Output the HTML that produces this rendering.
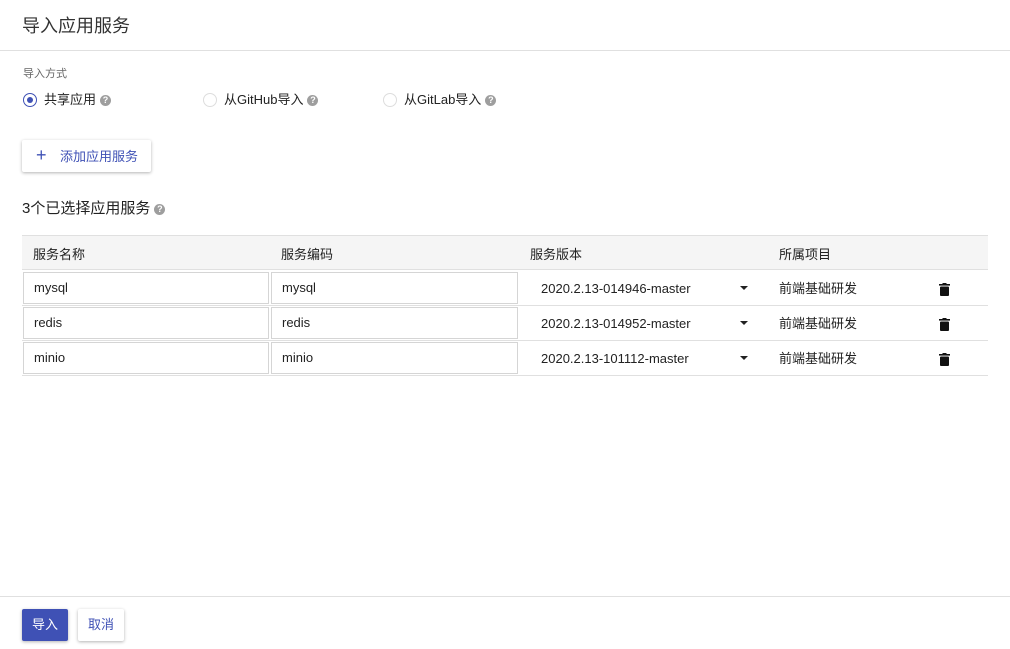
<!DOCTYPE html>
<html><head><meta charset="utf-8"><style>
*{box-sizing:border-box;margin:0;padding:0}
body{width:1010px;height:649px;background:#fff;font-family:"Liberation Sans","Noto Sans CJK SC",sans-serif;color:#222;position:relative;overflow:hidden;font-size:13px}
.a{position:absolute;white-space:nowrap}
.q{display:inline-block;width:11px;height:11px;border-radius:50%;background:#9e9e9e;color:#fff;font-size:9px;line-height:11px;text-align:center;font-weight:bold;vertical-align:1px;margin-left:4px}
.r{position:absolute;width:14px;height:14px;border-radius:50%;border:1px solid #ddd}
.in{position:absolute;height:32px;border:1px solid #d5d5d5;padding-left:10px;line-height:30px;font-size:13px}
.hl{position:absolute;left:22px;width:966px;height:1px;background:#e0e0e0}
.tr{position:absolute;width:11px;height:13px}
</style></head><body>
<div class="a" style="left:22px;top:12px;font-size:18px;color:#333">导入应用服务</div>
<div style="position:absolute;left:0;top:50px;width:1010px;height:1px;background:#e0e0e0"></div>
<div class="a" style="left:23px;top:65px;font-size:11px;color:#666">导入方式</div>
<div class="r" style="left:23px;top:93px;border-color:#3f51b5"><div style="position:absolute;left:3px;top:3px;width:6px;height:6px;border-radius:50%;background:#3f51b5"></div></div>
<div class="a" style="left:44px;top:89px">共享应用<span class="q">?</span></div>
<div class="r" style="left:203px;top:93px"></div>
<div class="a" style="left:224px;top:89px">从GitHub导入<span class="q">?</span></div>
<div class="r" style="left:383px;top:93px"></div>
<div class="a" style="left:404px;top:89px">从GitLab导入<span class="q">?</span></div>
<div style="position:absolute;left:22px;top:140px;width:129px;height:32px;background:#fff;box-shadow:0 1px 3px rgba(0,0,0,.3);border-radius:2px"></div>
<div class="a" style="left:36px;top:145px;font-size:18px;color:#3f51b5;font-weight:300">+</div>
<div class="a" style="left:60px;top:146px;color:#3f51b5">添加应用服务</div>
<div class="a" style="left:22px;top:197px;font-size:15px;color:#222">3个已选择应用服务<span class="q">?</span></div>
<div style="position:absolute;left:22px;top:235px;width:966px;height:35px;background:#f5f5f5;border-top:1px solid #e0e0e0"></div>
<div class="a" style="left:33px;top:244px">服务名称</div>
<div class="a" style="left:281px;top:244px">服务编码</div>
<div class="a" style="left:530px;top:244px">服务版本</div>
<div class="a" style="left:779px;top:244px">所属项目</div>
<div class="hl" style="top:269px"></div>
<div class="hl" style="top:305px"></div>
<div class="hl" style="top:340px"></div>
<div class="hl" style="top:375px"></div>
<div class="in" style="left:23px;top:272px;width:246px">mysql</div>
<div class="in" style="left:271px;top:272px;width:247px">mysql</div>
<div class="in" style="left:23px;top:307px;width:246px">redis</div>
<div class="in" style="left:271px;top:307px;width:247px">redis</div>
<div class="in" style="left:23px;top:342px;width:246px">minio</div>
<div class="in" style="left:271px;top:342px;width:247px">minio</div>
<div class="a" style="left:541px;top:281px">2020.2.13-014946-master</div>
<div class="a" style="left:541px;top:316px">2020.2.13-014952-master</div>
<div class="a" style="left:541px;top:351px">2020.2.13-101112-master</div>
<div class="a" style="left:740px;top:286px;border:4px solid transparent;border-top:4px solid #222;border-bottom:0"></div>
<div class="a" style="left:740px;top:321px;border:4px solid transparent;border-top:4px solid #222;border-bottom:0"></div>
<div class="a" style="left:740px;top:356px;border:4px solid transparent;border-top:4px solid #222;border-bottom:0"></div>
<div class="a" style="left:779px;top:278px">前端基础研发</div>
<div class="a" style="left:779px;top:313px">前端基础研发</div>
<div class="a" style="left:779px;top:348px">前端基础研发</div>
<svg class="tr" style="left:939px;top:283px" viewBox="0 0 11 13"><rect x="0" y="1" width="11" height="1.6" fill="#111"/><rect x="3.5" y="0" width="4" height="1.5" fill="#111"/><rect x="1" y="3.5" width="9" height="9.5" rx="1" fill="#111"/></svg>
<svg class="tr" style="left:939px;top:318px" viewBox="0 0 11 13"><rect x="0" y="1" width="11" height="1.6" fill="#111"/><rect x="3.5" y="0" width="4" height="1.5" fill="#111"/><rect x="1" y="3.5" width="9" height="9.5" rx="1" fill="#111"/></svg>
<svg class="tr" style="left:939px;top:353px" viewBox="0 0 11 13"><rect x="0" y="1" width="11" height="1.6" fill="#111"/><rect x="3.5" y="0" width="4" height="1.5" fill="#111"/><rect x="1" y="3.5" width="9" height="9.5" rx="1" fill="#111"/></svg>
<div style="position:absolute;left:0;top:596px;width:1010px;height:1px;background:#e0e0e0"></div>
<div style="position:absolute;left:22px;top:609px;width:46px;height:32px;background:#3f51b5;border-radius:2px;box-shadow:0 1px 3px rgba(0,0,0,.3);color:#fff;text-align:center;line-height:32px">导入</div>
<div style="position:absolute;left:78px;top:609px;width:46px;height:32px;background:#fff;border-radius:2px;box-shadow:0 1px 3px rgba(0,0,0,.3);color:#3f51b5;text-align:center;line-height:32px">取消</div>
</body></html>
